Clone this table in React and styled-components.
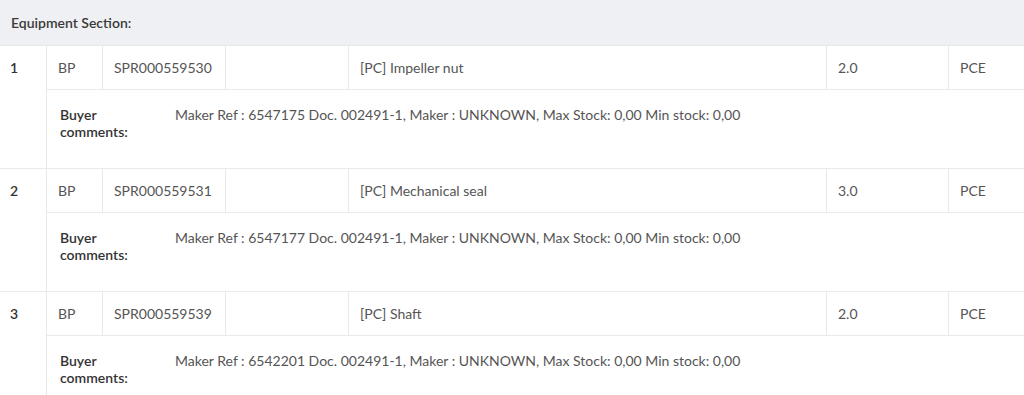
import React from "react";
import styled, { createGlobalStyle } from "styled-components";

const GlobalStyle = createGlobalStyle`
	body {
		margin: 0;
		background: #fff;
		font-family: Lato, "Open Sans", sans-serif;
		color: #555;
	}
`;

const items = [
	{ no: 1, type: "BP", code: "SPR000559530", name: "[PC] Impeller nut", qty: "2.0", unit: "PCE", comment: "Maker Ref : 6547175 Doc. 002491-1, Maker : UNKNOWN, Max Stock: 0,00 Min stock: 0,00" },
	{ no: 2, type: "BP", code: "SPR000559531", name: "[PC] Mechanical seal", qty: "3.0", unit: "PCE", comment: "Maker Ref : 6547177 Doc. 002491-1, Maker : UNKNOWN, Max Stock: 0,00 Min stock: 0,00" },
	{ no: 3, type: "BP", code: "SPR000559539", name: "[PC] Shaft", qty: "2.0", unit: "PCE", comment: "Maker Ref : 6542201 Doc. 002491-1, Maker : UNKNOWN, Max Stock: 0,00 Min stock: 0,00" },
];

const App = () => {
	return (
		<>
			<GlobalStyle />
			<Section>
				<SectionHeader>Equipment Section:</SectionHeader>
				{items.map((item) => (
					<Item key={item.no}>
						<Number>{item.no}</Number>
						<Cell>{item.type}</Cell>
						<Cell>{item.code}</Cell>
						<Cell></Cell>
						<Cell>{item.name}</Cell>
						<Cell>{item.qty}</Cell>
						<Cell $last>{item.unit}</Cell>
						<Comment>
							<CommentLabel>Buyer comments:</CommentLabel>
							<CommentText>{item.comment}</CommentText>
						</Comment>
					</Item>
				))}
			</Section>
		</>
	);
};

const Section = styled.div`
	width: 1024px;
	font-size: 14px;
`;

const SectionHeader = styled.div`
	height: 45px;
	display: flex;
	align-items: center;
	padding-left: 11px;
	background-color: #eff0f4;
	border-bottom: 1px solid #e6e8ec;
	font-weight: 600;
	color: #3a3a3a;
`;

const Item = styled.div`
	display: grid;
	grid-template-columns: 47px 56px 123px 123px 478px 122px 1fr;
	grid-template-rows: 44px 79px;
`;

const Number = styled.div`
	grid-row: span 2;
	padding: 13px 10px;
	font-weight: 600;
	color: #333;
	border-right: 1px solid #e8e9ed;
	border-bottom: 1px solid #e8e9ed;
`;

const Cell = styled.div`
	display: flex;
	align-items: center;
	padding: 0 10px 0 11px;
	border-right: ${(p) => (p.$last ? "none" : "1px solid #e8e9ed")};
	border-bottom: 1px solid #e8e9ed;
	white-space: nowrap;
`;

const Comment = styled.div`
	grid-column: 2 / -1;
	display: flex;
	align-items: flex-start;
	padding: 16px 13px;
	border-bottom: 1px solid #e8e9ed;
	line-height: 17px;
`;

const CommentLabel = styled.div`
	width: 74px;
	margin-right: 41px;
	font-weight: 600;
	color: #333;
`;

const CommentText = styled.div`
	color: #555;
`;

export default App;
